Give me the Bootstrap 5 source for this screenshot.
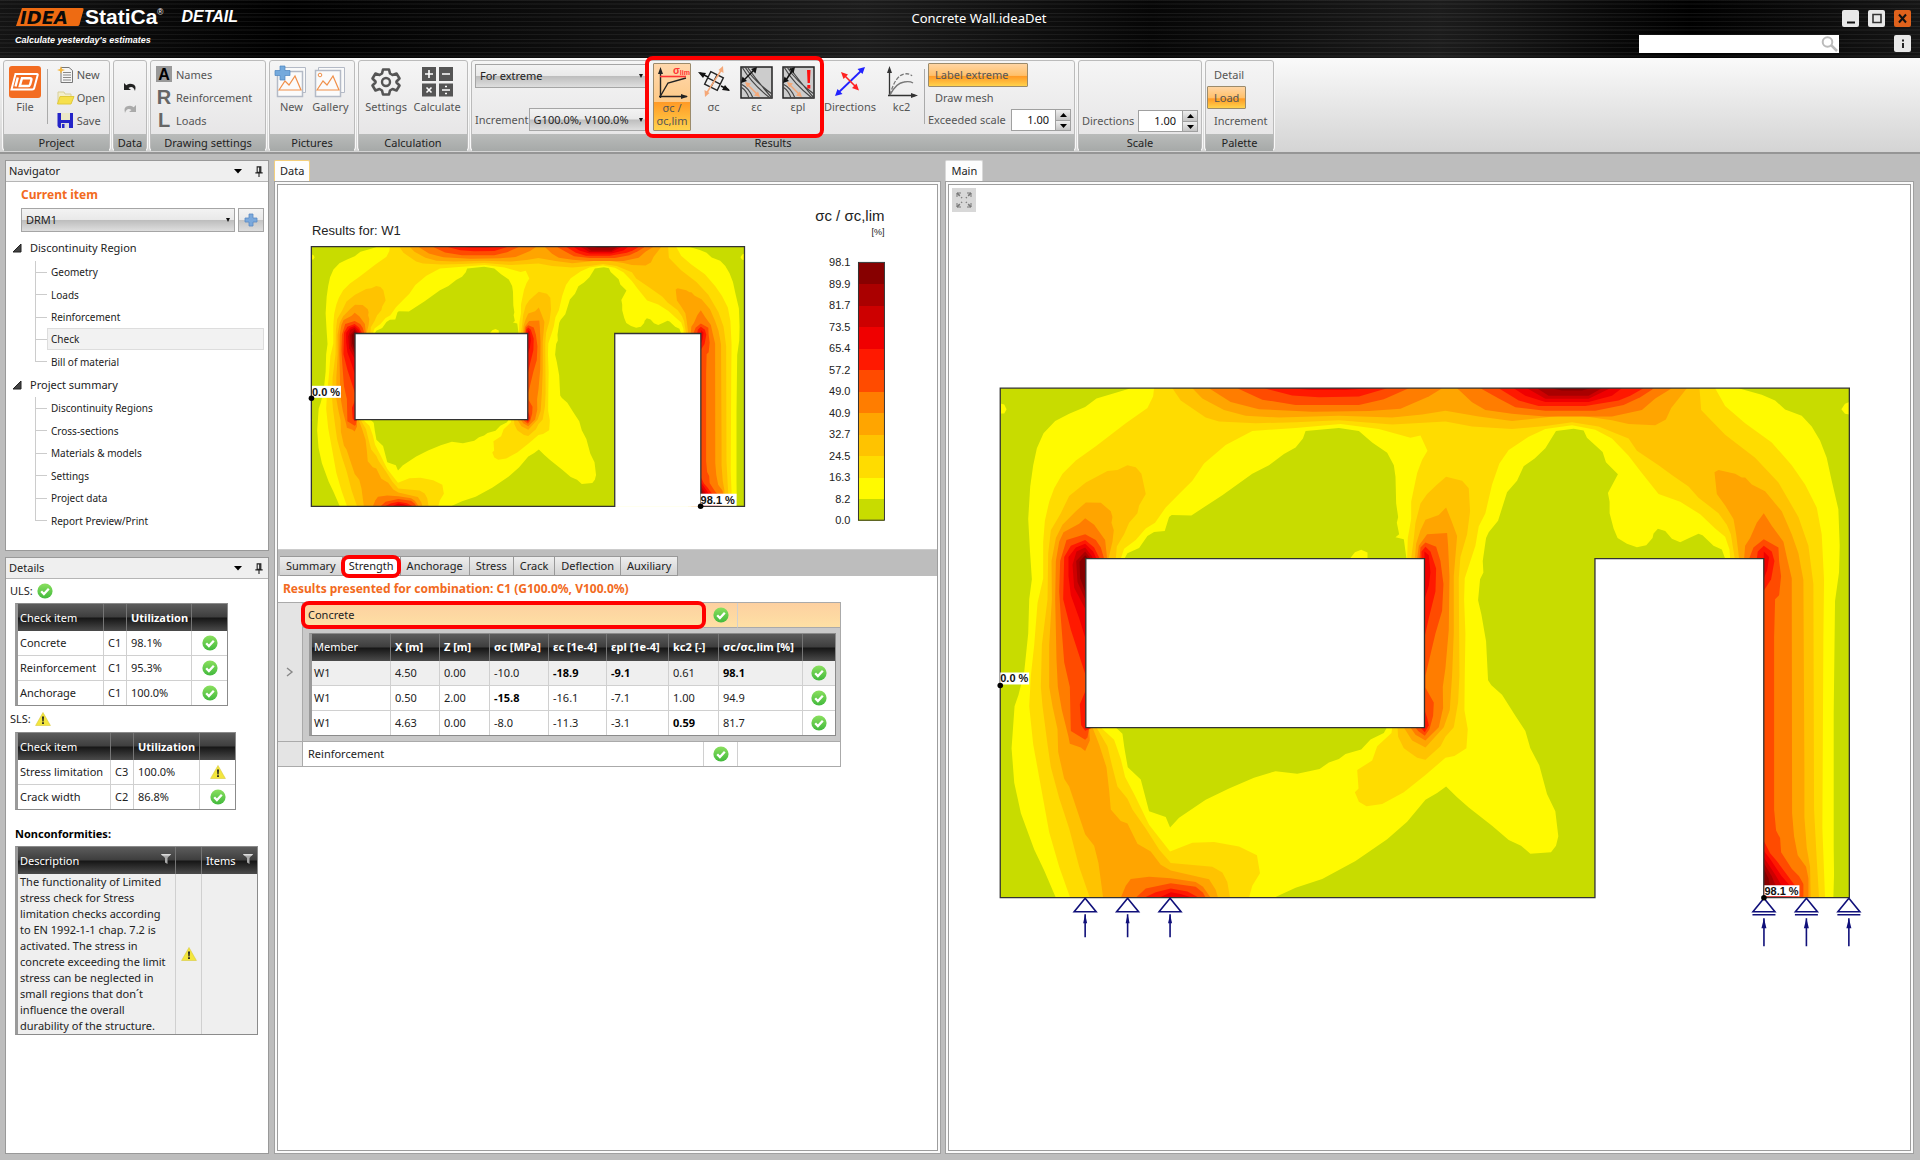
<!DOCTYPE html>
<html lang="en">
<head>
<meta charset="utf-8">
<meta name="viewport" content="width=device-width, initial-scale=1">
<title>Concrete Wall.ideaDet</title>
<link href="https://cdn.jsdelivr.net/npm/bootstrap@5.3.0/dist/css/bootstrap.min.css" rel="stylesheet">
<style>
:root{--ui:"Noto Sans","Open Sans",sans-serif;--orange:#f26a21}
body{font-family:var(--ui);font-size:11px;line-height:16px;color:#222;background:#bdbdbd;min-height:100vh}
button,input,select{font-family:inherit;font-size:inherit;line-height:inherit;color:inherit}
a{color:inherit;text-decoration:none}
svg{display:block;flex:none}

.titlebar{height:58px;color:#fff;background:
 repeating-linear-gradient(180deg,rgba(255,255,255,.07) 0 1px,transparent 1px 3px,rgba(255,255,255,.04) 3px 5px,transparent 5px 8px,rgba(255,255,255,.06) 8px 9px,transparent 9px 13px),
 linear-gradient(90deg,#141414,#000 15%,#1c1c1c 45%,#060606 60%,#1c1c1c 75%,#000 88%,#151515)}
.brand{width:326px;padding:6px 0 0 15px}
.logo-word{font:bold 21px/22px "Liberation Sans",sans-serif}
.logo-mod{font:italic bold 16px/22px "Liberation Sans",sans-serif;margin-left:18px}
.slogan{font:italic bold 9px/14px "Liberation Sans",sans-serif;margin-top:5px}
.doc-title{font-size:13px;padding-top:10px}
.tools{width:288px;padding:10px 9px 0 7px}
.win-btn{width:17px;height:17px;border:0;border-radius:2px;background:#e8e8e8;padding:0;color:#111}
.win-close{background:#e0621c}
.search{width:200px;height:18px;background:#fff;margin-right:55px}
.search input{border:0;outline:0;background:none;min-width:0;height:18px}

.ribbon{background:linear-gradient(#fafafa,#d4d4d4);border-bottom:2px solid #959595;padding:2px 3px;height:96px;gap:3px}
.rgroup{border:1px solid #bbb;border-radius:3px;background:linear-gradient(#f5f5f5,#e4e3e4);box-shadow:0 0 0 1px #f8f8f8;overflow:visible;color:#555}
.rgroup h2{margin:0;font-size:11px;line-height:17px;font-weight:400;text-align:center;color:#222;background:linear-gradient(#b9bbba,#a6a9a8)}
.rbody{height:73px;padding:2px 3px}
.rbtn{border:1px solid transparent;background:none;padding:0;color:#555;border-radius:1px}
.rbtn.big{height:68px;display:flex;flex-direction:column;align-items:center;padding-top:2px}
.rbtn.row-item{height:23px;display:flex;align-items:center;gap:3px;white-space:nowrap}
.rbtn svg{overflow:visible}
.rbtn.on{border:1px solid #9b8b6c;background:linear-gradient(#ffd5a3,#ffc06a 52%,#ff9a26 56%,#ffd24c)}
.rbtn.big.on{background:linear-gradient(#ffd8ad,#fdc987 57%,#ff9a26 58%,#ffd24c)}
.rg-project{width:107px}.rg-data{width:34px}.rg-draw{width:116px}.rg-pict{width:86px}
.rg-calc{width:110px}.rg-res{width:604px}.rg-scale{width:124px}.rg-pal{width:69px}
.rsep{width:1px;background:#aaa;margin:6px 0 8px}
.spin{width:60px;height:22px;background:#fff;border:1px solid #a0a0a0}
.spin input{width:43px;border:0;outline:0;text-align:right;padding:0 6px 0 0;color:#111;background:none;appearance:textfield;-moz-appearance:textfield}
.spin input::-webkit-inner-spin-button{display:none}
.spin button{width:15px;height:10px;border:0;border-left:1px solid #a0a0a0;padding:0;background:linear-gradient(#eee,#c4c4c4);display:flex;align-items:center;justify-content:center}
.spin button+button{border-top:1px solid #a0a0a0}
.pick{position:relative}
.pick select{width:100%;height:100%;appearance:none;border:1px solid #a5a5a5;padding:0 4px;color:#222;background:linear-gradient(#f3f3f3,#e9e9e9 49%,#bdbdbd 51%,#dedede);border-radius:0}
.pick::after{content:"";position:absolute;right:5px;top:50%;margin-top:-2px;border:2px solid transparent;border-top:4px solid #111;border-bottom:0;pointer-events:none}
.hl{position:relative}
.hl::after{content:"";position:absolute;border:4px solid #f00;border-radius:8px;pointer-events:none;z-index:3}
.hl-tools::after{inset:-7px -5px -6px -8px}
.hl-tab::after{inset:-2px -1px -3px -2px}
.hl-row::after{inset:-2px -3px -2px -2px}

.work{padding:6px 6px 6px 5px;gap:6px}
.side{width:264px;gap:6px}
.pane{background:#fff;border:1px solid #999}
.pane-head{height:21px;background:#efefef;border-bottom:1px solid #b5b5b5;padding:0 4px 0 3px}
.nav-pane{height:391px}
.current{color:var(--orange);font-weight:700;font-size:12px;line-height:26px;padding-left:15px}
.item-row{padding:0 4px 0 15px;gap:3px;height:24px}
.add-btn{width:26px;border:1px solid #a5a5a5;background:linear-gradient(#f3f3f3,#e9e9e9 49%,#c4c4c4 51%,#dedede);padding:0}
.tree-head{height:24px;gap:8px;padding-left:6px}
.tree-first{margin:4px 0 1px}
.tree{list-style:none;margin:0 4px 0 29px;padding:0;display:flex;flex-direction:column;font-size:10px}
.tree-a{height:112px}.tree-b{height:135px}
.tree li{flex:1 1 0;display:flex;align-items:center;border-left:1px solid #ccc}
.tree li:last-child{border-color:transparent;position:relative}
.tree li:last-child::after{content:"";position:absolute;left:-1px;top:0;height:50%;border-left:1px solid #ccc}
.tree li::before{content:"";width:11px;border-top:1px solid #ccc;flex:none}
.tree a{flex:1;padding-left:3px;line-height:20px;border:1px solid transparent}
.tree a.on{background:#f2f2f2;border-color:#ddd}

.grid{border:1px solid #8b8b8b;border-left:3px solid #9a9a9a;table-layout:fixed;border-collapse:separate;border-spacing:0;margin:0}
.grid th{height:27px;color:#fff;font-weight:400;background:linear-gradient(#5c5c5c,#3e3e3e 48%,#161616 52%,#4b4b4b);border-right:1px solid #757575;padding:0 0 0 4px;white-space:nowrap}
.grid td{height:25px;border-right:1px solid #d0d0d0;border-bottom:1px solid #d0d0d0;padding:0 0 0 4px;white-space:nowrap}
.grid tr>:first-child{padding-left:2px}
.grid tr>:last-child{border-right:0}
.grid tr:last-child td{border-bottom:0;height:24px}
.grid td svg{margin:0 auto}
.grid td.ico{padding:0}
.grid tr:last-child td.note{background:#efefef;white-space:normal;height:160px}
.grid td.note:first-child{padding-right:8px}
.grid th b{font-weight:700}
.g-uls{width:213px}.g-sls{width:221px}.g-non{width:243px}
.side-body{padding-left:9px}

.tab-top{height:21px;padding:0 5px;border:1px solid #d9d9d9;border-bottom:0;background:#fdfdfd;border-radius:2px 2px 0 0}
.tab-top.warm{border-color:#f3cf7c}
.dock{background:#fafafa;border:1px solid #a0a0a0;padding:2px}
.sheet{background:#fff;border:1px solid #9d9d9d}
.data-col{flex:667 1 0;min-width:0;margin-left:-1px}
.main-col{flex:968 1 0;min-width:0;margin-left:-2px}
.plot{width:100%;height:auto}
.tabs{background:#bdbdbd;border-top:1px solid #ccc;height:27px;padding:6px 0 0 2px}
.tabs button{border:1px solid #999;border-left-width:0;background:linear-gradient(#eee,#d3d3d3);height:20px;padding:0 6px;color:#222}
.tabs button.on{background:#fff}
.combo{color:var(--orange);font-weight:700;font-size:12px;line-height:26px;padding-left:5px}
.outer{width:563px;border-collapse:separate;border-spacing:0;table-layout:fixed;border:1px solid #aaa;border-left:0;margin:0}
.outer>tbody>tr>td{padding:0;border-bottom:1px solid #aaa}
.outer>tbody>tr:last-child>td{border-bottom:0}
.outer td.gut{background:#e4e4e4;border-right:1px solid #aaa;text-align:center}
.outer .cellrow{height:24px;padding-left:5px;line-height:24px}
.outer .vline{border-right:1px solid #d0d0d0}
.outer .sel{background:linear-gradient(#fdd0a0,#fee0a4)}
.outer .nest{background:#c9c9c9;padding:5px 4px 5px 6px}
.g-res{width:100%;background:#fff}
.g-res th{font-weight:700}.g-res th:first-child{font-weight:400}
.g-res td b{color:#000}
.shade td{background:#efefef}
.canvas{position:relative;min-height:600px}
.fit-btn{position:absolute;left:3px;top:3px;width:24px;height:24px;border:0;background:#d8d8d8;padding:0}
.canvas>.plot{position:absolute;inset:0;width:100%;height:100%}
.arial{font-family:"Liberation Sans",Arial,sans-serif}
.iso polygon{stroke:#fff0b0;stroke-opacity:.35;stroke-width:1px;vector-effect:non-scaling-stroke}
</style>
<script src="https://cdn.jsdelivr.net/npm/bootstrap@5.3.0/dist/js/bootstrap.bundle.min.js"></script>
</head>
<body class="d-flex flex-column">

<svg width="0" height="0" class="position-absolute" aria-hidden="true">
<defs>
<linearGradient id="okg" x2="0" y2="1"><stop stop-color="#8be05f"/><stop offset="1" stop-color="#41b93c"/></linearGradient>
<symbol id="ok" viewBox="0 0 16 16"><circle cx="8" cy="8" r="7.6" fill="url(#okg)"/><path d="M4.2 8.2l2.7 2.8 4.9-5.2" fill="none" stroke="#fff" stroke-width="2.3"/></symbol>
<symbol id="warn" viewBox="0 0 16 16"><path d="M8 1.5L15.4 14.5H.6z" fill="#f3e63d" stroke="#d9c940" stroke-width=".6"/><path d="M7 5.5h2l-.4 5h-1.2zM7.1 11.3h1.8v1.8H7.1z" fill="#222"/></symbol>
<symbol id="pin" viewBox="0 0 10 12"><path d="M3 1h4v6H3zM1 7.5h8M5 8v4" fill="none" stroke="#222" stroke-width="1.2"/><path d="M6 1v6" stroke="#222" stroke-width="1.6"/></symbol>
<symbol id="funnel" viewBox="0 0 10 12"><path d="M0 1h10L6.500 5v6L4 9.500V5z" fill="#aaa"/><path d="M0 1h10L9 2.500H1z" fill="#ddd"/></symbol>
<g id="contours">
 <polygon points="63,48 2613,48 2613,1381 63,1381" fill="#fffa00"/>
 <g fill="#c8dc00">
  <polygon points="63,48 455,48 410,60 352,75 318,97 270,115 228,134 193,166 173,205 162,250 153,305 147,390 152,470 158,548 150,600 147,690 135,790 118,850 106,880 97,990 105,1080 125,1160 165,1255 195,1310 230,1381 63,1381"/>
  <polygon points="980,160 1080,152 1140,160 1180,190 1225,217 1245,250 1250,280 1252,350 1258,385 1254,400 1261,430 1250,438 1275,443 1283,494 436,494 445,480 480,466 505,435 525,424 557,422 570,385 578,380 637,381 730,328 820,272 870,250 915,220 950,203 972,180"/>
  <polygon points="1732,160 1785,154 1815,159 1825,178 1872,215 1882,242 1918,273 1888,322 1893,345 1893,375 1905,415 1917,440 1945,455 1975,464 2003,459 2022,440 2025,428 2038,416 2060,422 2080,442 2105,451 2132,440 2160,429 2172,433 2205,460 2230,470 2240,494 1849,494 1849,1381 885,1381 950,1355 1030,1332 1130,1285 1225,1228 1285,1182 1340,1125 1375,1107 1402,1090 1435,1118 1470,1145 1540,1193 1590,1230 1627,1245 1655,1266 1717,1262 1732,1245 1739,1220 1730,1155 1705,1110 1682,1035 1655,990 1640,945 1610,905 1570,850 1538,825 1528,812 1522,710 1508,640 1498,603 1504,548 1514,530 1512,500 1522,440 1530,425 1558,395 1585,320 1615,290 1635,252 1668,232 1700,205"/>
  <polygon points="410,936 430,952 436,990 446,1040 485,1072 510,1155 560,1170 573,1197 600,1172 680,1125 750,1095 825,1067 890,1050 955,1057 1022,1044 1050,1027 1080,1018 1100,1005 1147,993 1175,967 1215,950 1224,936"/>
  <polygon points="2280,48 2350,65 2390,80 2420,104 2470,120 2500,148 2525,185 2545,230 2560,290 2580,365 2584,460 2582,530 2570,605 2566,900 2566,1250 2567,1320 2565,1381 2613,1381 2613,48"/>
 </g>
 <g fill="#fffa00">
  <polygon points="1113,494 1128,477 1147,471 1166,478 1166,494"/>
  <polygon points="63,88 75,91 82,103 75,114 63,114"/>
  <polygon points="2613,84 2600,89 2589,103 2600,115 2613,117"/>
 </g>
 <polygon fill="#ffdc00" points="525,48 522,70 505,100 440,140 350,200 290,237 250,272 225,310 210,345 197,395 192,450 192,545 175,610 165,720 155,800 150,880 162,980 185,1090 210,1210 240,1300 273,1381 810,1381 820,1350 843,1317 834,1270 780,1247 705,1235 640,1237 573,1260 510,1190 465,1110 438,1065 425,1018 405,968 365,936 425,494 435,468 470,445 500,415 528,400 560,360 600,325 640,290 675,245 740,197 820,160 950,152 1085,142 1200,155 1295,178 1325,172 1346,212 1330,235 1315,270 1297,345 1297,390 1287,440 1285,494 1240,936 1238,950 1195,985 1180,1022 1135,1047 1139,1095 1128,1105 1140,1130 1163,1142 1210,1136 1275,1105 1340,1060 1400,1015 1427,1010 1463,990 1467,940 1457,890 1458,800 1460,690 1456,600 1458,545 1475,500 1490,460 1500,410 1520,375 1540,300 1562,245 1590,210 1650,175 1700,155 1780,145 1850,157 1900,180 1950,225 1985,265 2040,325 2105,345 2165,378 2210,415 2240,437 2253,470 2255,494 2300,1381 2540,1381 2532,1200 2535,700 2537,550 2530,430 2515,360 2480,300 2440,250 2380,190 2300,140 2240,95 2210,48"/>
 <g fill="#ffc300">
  <polygon points="580,48 605,80 680,125 720,135 830,140 950,137 1080,132 1240,143 1400,135 1480,148 1600,155 1700,147 1780,137 1860,148 1950,180 1975,212 2040,250 2080,275 2130,305 2160,335 2220,375 2245,405 2257,430 2269,494 2300,1381 2522,1381 2515,1280 2507,1150 2505,560 2490,460 2460,385 2400,295 2330,230 2240,170 2168,105 2163,48"/>
  <polygon points="445,250 470,255 487,272 500,325 480,355 475,375 450,400 435,430 413,462 410,494 352,936 385,985 400,1040 415,1090 445,1122 460,1150 500,1200 540,1255 575,1290 700,1300 730,1315 745,1340 753,1381 332,1381 300,1300 270,1200 240,1120 215,1040 205,980 190,880 185,830 188,720 205,600 207,480 215,420 245,375 270,330 320,295 385,265 415,262"/>
  <polygon points="1402,280 1450,290 1470,310 1474,370 1465,430 1445,490 1440,545 1442,800 1438,870 1425,935 1400,960 1385,985 1340,1020 1315,1015 1275,990 1258,960 1256,936 1290,850 1297,494 1305,440 1310,400 1325,350 1345,325 1375,300"/>
 </g>
 <g fill="#ffa500">
  <polygon points="640,48 670,75 735,105 800,120 900,125 1080,120 1240,125 1330,117 1400,107 1500,122 1600,134 1780,117 1900,132 1950,142 2030,145 2062,130 2078,100 2125,48"/>
  <polygon points="320,347 365,348 395,370 400,385 397,400 404,420 400,450 388,494 340,936 360,980 382,1040 390,1100 395,1150 425,1180 445,1187 475,1240 515,1260 545,1295 575,1310 690,1333 710,1360 717,1381 372,1381 358,1290 345,1245 318,1215 270,1090 255,1070 237,1000 235,940 220,880 210,830 210,720 218,600 217,500 230,440 250,405 290,370"/>
  <polygon points="1402,360 1418,395 1435,435 1425,540 1425,690 1420,800 1413,890 1395,935 1340,988 1300,970 1275,936 1310,850 1308,494 1312,455 1325,420 1340,392 1380,380"/>
  <polygon points="2208,268 2220,262 2270,272 2290,282 2300,282 2320,300 2360,318 2410,370 2440,430 2460,480 2475,550 2478,1050 2478,1170 2485,1250 2495,1300 2497,1381 2280,1381 2282,494 2273,430 2265,390 2240,355 2215,325"/>
 </g>
 <g fill="#ff7d00">
  <polygon points="690,48 755,84 840,103 1000,110 1170,108 1265,102 1350,70 1390,48"/>
  <polygon points="1435,48 1480,85 1520,105 1600,115 1700,122 1900,122 1990,105 2030,75 2080,48"/>
  <polygon points="318,388 345,405 378,445 384,494 330,936 332,970 318,997 305,988 272,978 268,960 248,890 236,830 232,760 228,600 230,500 240,450 253,425 300,403"/>
  <polygon points="1345,430 1405,427 1408,460 1412,540 1410,680 1400,780 1392,830 1393,885 1380,935 1340,970 1310,955 1295,936 1320,850 1315,494 1320,460"/>
  <polygon points="2356,375 2380,408 2415,450 2425,490 2440,545 2441,1160 2447,1220 2458,1270 2483,1300 2490,1330 2490,1381 2300,1381 2297,494 2300,460 2315,440 2335,400"/>
  <polygon points="425,1381 440,1350 455,1332 510,1326 575,1330 650,1340 672,1352 695,1381"/>
 </g>
 <g fill="#ff4b00">
  <polygon points="775,48 850,78 950,92 1140,92 1215,77 1290,48"/>
  <polygon points="1505,48 1560,75 1610,98 1700,107 1850,107 1935,92 1985,72 2020,52 2025,48"/>
  <polygon points="318,430 350,445 365,465 375,494 330,936 325,962 318,968 275,945 272,830 255,765 245,650 240,580 243,500 262,445"/>
  <polygon points="1340,452 1372,463 1385,500 1394,560 1390,630 1370,690 1340,800 1340,832 1365,870 1363,905 1352,940 1338,957 1318,945 1310,936 1325,850 1322,494 1325,465"/>
  <polygon points="2356,443 2400,465 2402,500 2408,540 2402,590 2390,600 2387,700 2387,1150 2393,1205 2405,1225 2408,1262 2440,1305 2462,1325 2475,1345 2475,1381 2300,1381 2312,494 2325,465"/>
  <polygon points="470,1381 500,1357 575,1343 650,1352 672,1368 680,1381"/>
 </g>
 <g fill="#ff1900">
  <polygon points="855,48 940,67 1020,72 1140,70 1225,48"/>
  <polygon points="1560,48 1620,80 1680,95 1820,95 1920,80 1955,68 1995,48"/>
  <polygon points="318,445 345,465 362,494 340,600 340,936 318,944 306,930 302,875 318,842 330,820 318,795 275,680 252,600 255,490 275,460"/>
  <polygon points="1340,463 1355,475 1372,520 1370,580 1350,650 1337,700 1328,600 1328,475"/>
  <polygon points="1337,890 1345,910 1350,930 1338,948 1325,936"/>
  <polygon points="2356,460 2380,475 2388,500 2378,548 2356,578 2335,494 2338,475"/>
  <polygon points="2356,1232 2375,1265 2395,1285 2425,1320 2450,1350 2460,1381 2350,1381"/>
  <polygon points="495,1381 530,1367 575,1357 625,1365 660,1381"/>
 </g>
 <g fill="#f00000">
  <polygon points="930,48 1000,53 1100,53 1170,48"/>
  <polygon points="1605,48 1640,68 1700,84 1830,84 1900,68 1930,48"/>
  <polygon points="318,455 342,475 352,494 335,600 318,700 300,650 275,590 268,540 268,490 290,465"/>
  <polygon points="1337,475 1350,485 1355,530 1350,565 1337,600"/>
  <polygon points="2356,475 2372,490 2366,525 2356,545"/>
  <polygon points="2356,1258 2375,1280 2410,1325 2435,1350 2440,1381 2350,1381"/>
  <polygon points="540,1381 575,1367 605,1371 640,1381"/>
 </g>
 <g fill="#cd0000">
  <polygon points="1645,48 1700,76 1830,76 1895,48"/>
  <polygon points="318,465 340,490 318,625 285,570 280,510 292,475"/>
  <polygon points="2356,1275 2390,1320 2410,1350 2415,1381 2350,1381"/>
 </g>
 <g fill="#aa0000">
  <polygon points="1675,48 1710,68 1830,68 1870,48"/>
  <polygon points="318,475 335,494 318,600 295,555 291,500"/>
  <polygon points="2356,1290 2380,1325 2392,1350 2356,1365"/>
 </g>
 <g fill="#870000">
  <polygon points="1715,48 1750,54 1810,54 1835,48"/>
  <polygon points="318,485 328,494 318,580 303,545 301,502"/>
  <polygon points="2356,1305 2370,1330 2375,1350 2356,1360"/>
 </g>
 <path d="M320 494H1337V936H320zM1849 494H2356V1383H1849z" fill="#fff"/>
 <path d="M63 48H2613V1381H2356V494H1849V1381H63zM320 494H1337V936H320z" fill="none" stroke="#333" stroke-width="1.300" vector-effect="non-scaling-stroke"/>
</g>
<g id="sup"><path d="M0 1L11 14.500H-11zM0 17V40" fill="none" stroke="#10107a" stroke-width="1.600"/><path d="M0 17l2 9h-4z" fill="#10107a"/></g>
<g id="supr"><path d="M0 1L11 14.500H-11zM-11.500 17.500H11.500M0 21V49" fill="none" stroke="#10107a" stroke-width="1.600"/><path d="M0 21l2.500 10h-5z" fill="#10107a"/></g>
</defs>
</svg>

<header class="titlebar d-flex">
 <div class="brand">
  <div class="d-flex align-items-center">
   <svg width="70" height="22" viewBox="0 0 70 22" role="img" aria-label="IDEA"><path d="M7 2H67.500Q69 2 68.500 4L64.500 18.500Q64 20 62.500 20H1z" fill="#ee6b12"/><text x="5" y="17.500" font-family="DejaVu Sans,sans-serif" font-weight="bold" font-style="italic" font-size="18" fill="#0a0a0a">IDEA</text></svg>
   <span class="logo-word">StatiCa</span><sup class="arial">®</sup>
   <span class="logo-mod">DETAIL</span>
  </div>
  <div class="slogan">Calculate yesterday's estimates</div>
 </div>
 <div class="doc-title flex-fill text-center">Concrete Wall.ideaDet</div>
 <div class="tools d-flex flex-column">
  <div class="d-flex justify-content-end" style="gap:9px">
   <button class="win-btn" aria-label="Minimize"><svg width="17" height="17"><path d="M5 12.500h8" stroke="#111" stroke-width="2"/></svg></button>
   <button class="win-btn" aria-label="Maximize"><svg width="17" height="17"><path d="M5 4.500h8v8H5z" fill="none" stroke="#333" stroke-width="1.600"/></svg></button>
   <button class="win-btn win-close" aria-label="Close"><svg width="17" height="17"><path d="M5 4.500l7 8M12 4.500l-7 8" stroke="#111" stroke-width="2"/></svg></button>
  </div>
  <div class="d-flex pt-2 justify-content-end">
   <div class="search d-flex align-items-center"><input class="flex-fill" type="text" aria-label="Search"><svg width="18" height="18"><circle cx="6.500" cy="7" r="4.800" fill="none" stroke="#bbb" stroke-width="2"/><path d="M10 10l6 6" stroke="#bbb" stroke-width="2.500"/></svg></div>
   <button class="win-btn" aria-label="Info"><svg width="17" height="17"><path d="M8 4.500h2v2H8zM8 8h2v5H8z" fill="#222"/></svg></button>
  </div>
 </div>
</header>

<div class="ribbon d-flex" role="toolbar">
 <section class="rgroup rg-project">
  <div class="rbody d-flex">
   <button class="rbtn big"><svg width="34" height="33" viewBox="0 0 34 33"><rect x="1" y="0" width="32" height="32" rx="3" fill="#f36c21"/><path d="M7.500 8H29q1 0 .7 1l-3.500 13q-.3 1.500-2 1.500H3.500z" fill="none" stroke="#fff" stroke-width="2"/><path d="M9.800 11.500l-2.300 9M14 12.200h8q1.800 0 1.400 1.500l-1.200 4.500q-.5 1.800-2.400 1.800h-8z" fill="none" stroke="#fff" stroke-width="2.400"/></svg>File</button>
   <div class="rsep mx-1"></div>
   <div class="ps-1">
    <button class="rbtn row-item"><svg width="17" height="17"><path d="M4 1.500h8l3.500 3v12H4z" fill="#f5f5f5" stroke="#777"/><path d="M6 6.500h8M6 9h8M6 11.500h8M6 14h8" stroke="#888"/><path d="M4 0l1 3 3 1-3 1-1 3-1-3-3-1 3-1z" fill="#f6b73c"/></svg>New</button>
    <button class="rbtn row-item"><svg width="17" height="17"><path d="M1 15V3h6l1 2h6v3" fill="#f3eecb" stroke="#d8cf9a"/><path d="M3 7.500h14L14 15H.5z" fill="#f6e04c" stroke="#e0c93c"/></svg>Open</button>
    <button class="rbtn row-item"><svg width="17" height="17"><path d="M.5 1h15.500v15H2L.5 14z" fill="#2424c8"/><path d="M4 1h9v7H4z" fill="#ece9c8"/><path d="M4 11h8v5H4z" fill="#ddd"/><path d="M5 12h2.500v4H5z" fill="#2424c8"/></svg>Save</button>
   </div>
  </div><h2>Project</h2>
 </section>
 <section class="rgroup rg-data">
  <div class="rbody d-flex flex-column align-items-center pt-3">
   <button class="rbtn mt-1" aria-label="Undo"><svg width="16" height="12"><path d="M2 1v7h7L6.500 6Q11 3 13 9q2-6-3-7Q6.500 1 4.300 3.200z" fill="#222"/></svg></button>
   <button class="rbtn mt-2" aria-label="Redo"><svg width="16" height="12"><path d="M14 1v7H7l2.500-2Q5 3 3 9q-2-6 3-7 3.500-1 5.700 1.200z" fill="#aaa"/></svg></button>
  </div><h2>Data</h2>
 </section>
 <section class="rgroup rg-draw">
  <div class="rbody ps-1">
   <button class="rbtn row-item"><svg width="17" height="17"><rect width="16" height="16" fill="#999"/><text x="8" y="14" text-anchor="middle" font-family="Liberation Sans" font-weight="bold" font-size="16" fill="#000">A</text></svg>Names</button>
   <button class="rbtn row-item"><svg width="17" height="17"><text x="8" y="15" text-anchor="middle" font-family="Liberation Sans" font-weight="bold" font-size="20" fill="#666">R</text></svg>Reinforcement</button>
   <button class="rbtn row-item"><svg width="17" height="17"><text x="8" y="15" text-anchor="middle" font-family="Liberation Sans" font-weight="bold" font-size="20" fill="#666">L</text></svg>Loads</button>
  </div><h2>Drawing settings</h2>
 </section>
 <section class="rgroup rg-pict">
  <div class="rbody d-flex justify-content-around">
   <button class="rbtn big"><svg width="32" height="33"><path d="M7.500 1.500h23v25h-23z" fill="#fafafa" stroke="#b4bac6"/><path d="M2.500 5.500h25v25h-25z" fill="#fbfbfb" stroke="#b4bac6" stroke-width="1.500"/><path d="M4 24l6-9 4 4 6-9 6 14z" fill="none" stroke="#f0904a" stroke-width="1.200"/><path d="M5 0h5v4.500h5v5h-5V14H5V9.500H0v-5h5z" fill="#74a9dc" stroke="#4c84bf" stroke-width=".7"/></svg>New</button>
   <button class="rbtn big"><svg width="32" height="33"><path d="M4.500 1.500h26v25h-26z" fill="#fafafa" stroke="#b4bac6"/><path d="M1.500 4.500h25v26h-25z" fill="#fbfbfb" stroke="#b4bac6" stroke-width="1.500"/><path d="M3 24l6-9 4 4 6-9 6 14z" fill="none" stroke="#f0904a" stroke-width="1.200"/><circle cx="6" cy="9" r="1.800" fill="none" stroke="#f0904a"/></svg>Gallery</button>
  </div><h2>Pictures</h2>
 </section>
 <section class="rgroup rg-calc">
  <div class="rbody d-flex justify-content-around">
   <button class="rbtn big"><svg width="32" height="33" viewBox="-16 -16 32 33"><path d="M-3-12.500h6l1 4 2.500 1.500 4-1.500 3 5-3 3v1l3 3-3 5-4-1.500L4 8.500l-1 4h-6l-1-4L-6.500 7l-4 1.500-3-5 3-3v-1l-3-3 3-5 4 1.500L-4-8.500z" fill="none" stroke="#555" stroke-width="2.600" stroke-linejoin="round"/><circle r="4" fill="none" stroke="#555" stroke-width="2.400"/></svg>Settings</button>
   <button class="rbtn big"><svg width="32" height="33"><path d="M1 1h14v14H1zM18 1h14v14H18zM1 17.500h14v13H1zM18 17.500h14v13H18z" fill="#555"/><path d="M8 4v8M4 8h8M21 8h8M5.500 21.500l5 5M10.500 21.500l-5 5M21 24h8M24 20.500h2M24 27.500h2" stroke="#fff" stroke-width="1.600"/></svg>Calculate</button>
  </div><h2>Calculation</h2>
 </section>
 <section class="rgroup rg-res">
  <div class="rbody d-flex">
   <div class="d-flex flex-column justify-content-between" style="width:173px;padding:1px 0">
    <div class="pick" style="height:24px"><select aria-label="Result selection"><option>For extreme</option></select></div>
    <div class="d-flex align-items-center" style="height:23px"><label for="inc">Increment</label><div class="pick flex-fill h-100"><select id="inc"><option>G100.0%, V100.0%</option></select></div></div>
   </div>
   <div class="rsep"></div>
   <div class="hl hl-tools d-flex" style="margin-left:4px">
    <button class="rbtn big on" style="width:38px;line-height:13px"><svg width="34" height="35"><path d="M5.500 32V5M4 30.500h28" stroke="#222" stroke-width="1.400"/><path d="M5.500 1l2.500 7H3zM33 30.500l-7-2.500v5z" fill="#222"/><path d="M5.500 30L13 17l18-5" fill="none" stroke="#222" stroke-width="1.400"/><path d="M5 10.500h26" stroke="#f33" stroke-width="1.600"/><text x="18" y="8" font-family="Liberation Sans" font-weight="bold" font-size="10" fill="#f33">σ<tspan font-size="7" dy="1">lim</tspan></text></svg>σc /<br>σc,lim</button>
    <button class="rbtn big" style="width:45px"><svg width="32" height="33"><g transform="rotate(26 16 15)"><path d="M9 8h14v14H9zM9 15h14M16 8v14" fill="none" stroke="#222" stroke-width="1.400"/></g><path d="M2 7l8 4M31 24l-8-4" stroke="#111" stroke-width="1.500"/><path d="M0 6l8 1-3 5zM32 25l-8-1 3-5z" fill="#111"/><path d="M24 3L8 28" stroke="#f5a878" stroke-width="1.500"/><path d="M25 0l.5 7-5-3zM7 31l-.5-7 5 3z" fill="#f5a878"/></svg>σc</button>
    <button class="rbtn big" style="width:41px"><svg width="33" height="33"><path d="M1 1h31v31H1z" fill="#ccc" stroke="#222" stroke-width="1.500"/><path d="M5 1Q14 15 32 28M2 1Q12 18 30 32M8 2Q18 16 32 32M1 18Q9 22 13 32M1 21Q7 25 9 32" fill="none" stroke="#444" stroke-width="1.200"/><path d="M4 14L14 4" stroke="#111" stroke-width="1.500"/><path d="M17 1l-1.500 6.500-4.500-4.500zM1 17l1.500-6.500 4.500 4.500z" fill="#111"/><path d="M7 18l11 11" stroke="#f5a878" stroke-width="1.500"/><path d="M5 16l6 1.500-4 4zM20 31l-6-1.500 4-4z" fill="#f5a878"/></svg>εc</button>
    <button class="rbtn big" style="width:42px"><svg width="33" height="33"><path d="M1 1h31v31H1z" fill="#ccc" stroke="#222" stroke-width="1.500"/><path d="M5 1Q14 15 32 28M2 1Q12 18 30 32M8 2Q18 16 32 32M1 18Q9 22 13 32M1 21Q7 25 9 32" fill="none" stroke="#444" stroke-width="1.200"/><path d="M4 14L10 5" stroke="#111" stroke-width="1.500"/><path d="M13 1l-1.500 6.500-4.500-4.500zM1 17l1.500-6.500 4.500 4.500z" fill="#111"/><path d="M7 18l11 11" stroke="#f5a878" stroke-width="1.500"/><path d="M5 16l6 1.500-4 4zM20 31l-6-1.500 4-4z" fill="#f5a878"/><path d="M25 4h3.500l-.6 13h-2.300zM25.300 19h3v3.500h-3z" fill="#f11"/></svg>εpl</button>
   </div>
   <button class="rbtn big" style="width:62px"><svg width="32" height="33"><path d="M4 27L28 4" stroke="#22f" stroke-width="1.800"/><path d="M31 1l-2.500 7-5-5zM1 30l2.500-7 5 5z" fill="#22f"/><path d="M10 9l13 13" stroke="#f22" stroke-width="1.600"/><path d="M7 6l7 2.500-4.500 4.500zM25 24.500l-7-2.500 4.500-4.500z" fill="#f22"/></svg>Directions</button>
   <button class="rbtn big" style="width:41px"><svg width="32" height="33"><path d="M3.500 30V5M2 29.500h27" stroke="#333" stroke-width="1.300"/><path d="M3.500 0l2.500 7H1zM32 29.500l-7-2.500v5z" fill="#333"/><path d="M4 29Q9 10 18 8q6-1 8 2" fill="none" stroke="#777" stroke-width="1.300" stroke-dasharray="4 1.500"/><path d="M4 29Q10 17 18 16q6-1 9 1" fill="none" stroke="#777" stroke-width="1.300"/></svg>kc2</button>
   <div class="rsep" style="margin-left:2px"></div>
   <div class="d-flex flex-column flex-fill" style="padding-left:3px">
    <button class="rbtn on align-self-start text-start" style="width:100px;height:24px;padding:0 6px">Label extreme</button>
    <button class="rbtn row-item" style="height:22px;padding:0 6px">Draw mesh</button>
    <div class="d-flex align-items-center justify-content-between"><label for="exs">Exceeded scale</label><div class="spin d-flex"><input id="exs" type="number" value="1.00" step="0.1"><div><button aria-label="Up"><svg width="7" height="4"><path d="M0 4h7L3.500 0z"/></svg></button><button aria-label="Down"><svg width="7" height="4"><path d="M0 0h7L3.500 4z"/></svg></button></div></div></div>
   </div>
  </div><h2>Results</h2>
 </section>
 <section class="rgroup rg-scale">
  <div class="rbody d-flex align-items-end"><div class="d-flex align-items-center justify-content-between flex-fill"><label for="dirs">Directions</label><div class="spin d-flex"><input id="dirs" type="number" value="1.00" step="0.1"><div><button aria-label="Up"><svg width="7" height="4"><path d="M0 4h7L3.500 0z"/></svg></button><button aria-label="Down"><svg width="7" height="4"><path d="M0 0h7L3.500 4z"/></svg></button></div></div></div></div>
  <h2>Scale</h2>
 </section>
 <section class="rgroup rg-pal">
  <div class="rbody d-flex flex-column align-items-start" style="padding:2px 1px">
   <button class="rbtn row-item" style="padding:0 6px">Detail</button>
   <button class="rbtn row-item on" style="padding:0 6px">Load</button>
   <button class="rbtn row-item" style="padding:0 6px">Increment</button>
  </div><h2>Palette</h2>
 </section>
</div>

<main class="work d-flex flex-fill">
 <aside class="side d-flex flex-column flex-shrink-0">
  <section class="pane nav-pane">
   <div class="pane-head d-flex align-items-center"><span class="flex-fill">Navigator</span><svg width="8" height="5" class="me-2"><path d="M0 0h8L4 4.500z"/></svg><svg width="10" height="11" class="ms-1"><use href="#pin"/></svg></div>
   <div class="current">Current item</div>
   <div class="item-row d-flex"><div class="pick flex-fill"><select aria-label="Current item"><option>DRM1</option></select></div><button class="add-btn d-flex align-items-center justify-content-center" aria-label="Add"><svg width="14" height="14"><path d="M5 1h4v4h4v4H9v4H5V9H1V5h4z" fill="#7ba9dc" stroke="#5b8cc4" stroke-width=".8"/></svg></button></div>
   <div class="tree-head tree-first d-flex align-items-center"><svg width="10" height="10"><path d="M9 1v8H1z" fill="#444" stroke="#222"/></svg>Discontinuity Region</div>
   <ul class="tree tree-a"><li><a href="#">Geometry</a></li><li><a href="#">Loads</a></li><li><a href="#">Reinforcement</a></li><li><a href="#" class="on">Check</a></li><li><a href="#">Bill of material</a></li></ul>
   <div class="tree-head d-flex align-items-center"><svg width="10" height="10"><path d="M9 1v8H1z" fill="#444" stroke="#222"/></svg>Project summary</div>
   <ul class="tree tree-b"><li><a href="#">Discontinuity Regions</a></li><li><a href="#">Cross-sections</a></li><li><a href="#">Materials &amp; models</a></li><li><a href="#">Settings</a></li><li><a href="#">Project data</a></li><li><a href="#">Report Preview/Print</a></li></ul>
  </section>
  <section class="pane flex-fill">
   <div class="pane-head d-flex align-items-center"><span class="flex-fill">Details</span><svg width="8" height="5" class="me-2"><path d="M0 0h8L4 4.500z"/></svg><svg width="10" height="11" class="ms-1"><use href="#pin"/></svg></div>
   <div class="d-flex align-items-center gap-1 ps-1" style="height:24px">ULS:<svg width="16" height="16"><use href="#ok"/></svg></div>
   <div class="side-body">
    <table class="grid g-uls"><colgroup><col style="width:86px"><col style="width:23px"><col style="width:65px"><col></colgroup>
     <tr><th>Check item</th><th></th><th><b>Utilization</b></th><th></th></tr>
     <tr><td>Concrete</td><td>C1</td><td>98.1%</td><td class="ico"><svg width="16" height="16"><use href="#ok"/></svg></td></tr>
     <tr><td>Reinforcement</td><td>C1</td><td>95.3%</td><td class="ico"><svg width="16" height="16"><use href="#ok"/></svg></td></tr>
     <tr><td>Anchorage</td><td>C1</td><td>100.0%</td><td class="ico"><svg width="16" height="16"><use href="#ok"/></svg></td></tr>
    </table>
   </div>
   <div class="d-flex align-items-center gap-1 ps-1" style="height:26px">SLS:<svg width="16" height="16"><use href="#warn"/></svg></div>
   <div class="side-body">
    <table class="grid g-sls"><colgroup><col style="width:93px"><col style="width:23px"><col style="width:66px"><col></colgroup>
     <tr><th>Check item</th><th></th><th><b>Utilization</b></th><th></th></tr>
     <tr><td>Stress limitation</td><td>C3</td><td>100.0%</td><td class="ico"><svg width="16" height="16"><use href="#warn"/></svg></td></tr>
     <tr><td>Crack width</td><td>C2</td><td>86.8%</td><td class="ico"><svg width="16" height="16"><use href="#ok"/></svg></td></tr>
    </table>
    <div class="fw-bold text-black pt-3 pb-1">Nonconformities:</div>
    <table class="grid g-non"><colgroup><col style="width:158px"><col style="width:26px"><col></colgroup>
     <tr><th><span class="d-flex justify-content-between pe-1">Description<svg width="10" height="12"><use href="#funnel"/></svg></span></th><th></th><th><span class="d-flex justify-content-between pe-1">Items<svg width="10" height="12"><use href="#funnel"/></svg></span></th></tr>
     <tr><td class="note">The functionality of Limited stress check for Stress limitation checks according to EN 1992-1-1 chap. 7.2 is activated. The stress in concrete exceeding the limit stress can be neglected in small regions that don´t influence the overall durability of the structure.</td><td class="note ico"><svg width="16" height="16"><use href="#warn"/></svg></td><td class="note"></td></tr>
    </table>
   </div>
  </section>
 </aside>

 <section class="data-col d-flex flex-column">
  <div class="d-flex"><button class="tab-top warm">Data</button></div>
  <div class="dock flex-fill d-flex"><div class="sheet flex-fill">
   <svg class="plot arial" viewBox="0 0 660 364" fill="#222">
    <text x="34" y="50" font-size="13">Results for: W1</text>
    <g class="iso" transform="translate(22.7 52.3) scale(.17 .195)"><use href="#contours"/></g>
    <rect x="34" y="201" width="29" height="12" fill="#fff"/><text x="34" y="211" font-size="11" font-weight="bold" fill="#111">0.0 %</text><circle cx="33.500" cy="213.500" r="2.800" fill="#000"/>
    <rect x="423" y="309" width="36" height="12" fill="#fff"/><text x="423" y="319" font-size="11" font-weight="bold" fill="#111">98.1 %</text><circle cx="423" cy="321.500" r="2.800" fill="#000"/>
    <text x="607" y="36" font-size="15" text-anchor="end">σc / σc,lim</text>
    <text x="607" y="50" font-size="9" text-anchor="end">[%]</text>
    <g shape-rendering="crispEdges">
     <rect x="581" y="78" width="26" height="22" fill="#870000"/><rect x="581" y="99" width="26" height="22" fill="#aa0000"/><rect x="581" y="121" width="26" height="22" fill="#cd0000"/><rect x="581" y="142" width="26" height="22" fill="#f00000"/><rect x="581" y="164" width="26" height="22" fill="#ff1900"/><rect x="581" y="185" width="26" height="22" fill="#ff4b00"/><rect x="581" y="207" width="26" height="22" fill="#ff7d00"/><rect x="581" y="228" width="26" height="22" fill="#ffa500"/><rect x="581" y="250" width="26" height="22" fill="#ffc300"/><rect x="581" y="271" width="26" height="22" fill="#ffdc00"/><rect x="581" y="293" width="26" height="22" fill="#fffa00"/><rect x="581" y="314" width="26" height="22" fill="#c8dc00"/>
    </g>
    <rect x="581" y="77.500" width="26" height="258" fill="none" stroke="#333"/>
    <g font-size="11" text-anchor="end"><text x="573" y="81">98.1</text><text x="573" y="103">89.9</text><text x="573" y="124">81.7</text><text x="573" y="146">73.5</text><text x="573" y="167">65.4</text><text x="573" y="189">57.2</text><text x="573" y="210">49.0</text><text x="573" y="232">40.9</text><text x="573" y="253">32.7</text><text x="573" y="275">24.5</text><text x="573" y="296">16.3</text><text x="573" y="318">8.2</text><text x="573" y="339">0.0</text></g>
   </svg>
   <div class="tabs d-flex"><button>Summary</button><button class="on hl hl-tab">Strength</button><button>Anchorage</button><button>Stress</button><button>Crack</button><button>Deflection</button><button>Auxiliary</button></div>
   <div class="combo">Results presented for combination: C1 (G100.0%, V100.0%)</div>
   <table class="outer"><colgroup><col style="width:25px"><col style="width:401px"><col style="width:34px"><col></colgroup>
    <tr><td class="gut" rowspan="2"><svg width="8" height="10" class="mx-auto"><path d="M1 1l5 4-5 4" fill="none" stroke="#888" stroke-width="1.400"/></svg></td><td class="sel vline"><div class="cellrow hl hl-row">Concrete</div></td><td class="sel vline"><svg width="16" height="16" class="mx-auto"><use href="#ok"/></svg></td><td class="sel"></td></tr>
    <tr><td colspan="3"><div class="nest">
     <table class="grid g-res"><colgroup><col style="width:79px"><col style="width:49px"><col style="width:50px"><col style="width:59px"><col style="width:58px"><col style="width:62px"><col style="width:50px"><col style="width:84px"><col></colgroup>
      <tr><th>Member</th><th>X [m]</th><th>Z [m]</th><th>σc [MPa]</th><th>εc [1e-4]</th><th>εpl [1e-4]</th><th>kc2 [-]</th><th>σc/σc,lim [%]</th><th></th></tr>
      <tr class="shade"><td>W1</td><td>4.50</td><td>0.00</td><td>-10.0</td><td><b>-18.9</b></td><td><b>-9.1</b></td><td>0.61</td><td><b>98.1</b></td><td class="ico"><svg width="16" height="16"><use href="#ok"/></svg></td></tr>
      <tr><td>W1</td><td>0.50</td><td>2.00</td><td><b>-15.8</b></td><td>-16.1</td><td>-7.1</td><td>1.00</td><td>94.9</td><td class="ico"><svg width="16" height="16"><use href="#ok"/></svg></td></tr>
      <tr><td>W1</td><td>4.63</td><td>0.00</td><td>-8.0</td><td>-11.3</td><td>-3.1</td><td><b>0.59</b></td><td>81.7</td><td class="ico"><svg width="16" height="16"><use href="#ok"/></svg></td></tr>
     </table></div></td></tr>
    <tr><td class="gut"></td><td class="vline"><div class="cellrow">Reinforcement</div></td><td class="vline"><svg width="16" height="16" class="mx-auto"><use href="#ok"/></svg></td><td></td></tr>
   </table>
  </div></div>
 </section>

 <section class="main-col d-flex flex-column">
  <div class="d-flex"><button class="tab-top">Main</button></div>
  <div class="dock flex-fill d-flex"><div class="sheet canvas flex-fill">
   <svg class="plot arial" viewBox="0 0 961 966">
    <g class="iso" transform="translate(30 185) scale(.33333 .38266)"><use href="#contours"/></g>
    <rect x="51" y="488" width="29" height="12" fill="#fff"/><text x="51" y="498" font-size="11" font-weight="bold" fill="#111">0.0 %</text><circle cx="51" cy="501" r="2.800" fill="#000"/>
    <rect x="816" y="701" width="35" height="11" fill="#fff"/><text x="816" y="711" font-size="11" font-weight="bold" fill="#111">98.1 %</text>
    <use href="#sup" x="136" y="713"/><use href="#sup" x="178.500" y="713"/><use href="#sup" x="221" y="713"/>
    <use href="#supr" x="815.500" y="713"/><use href="#supr" x="858" y="713"/><use href="#supr" x="900.500" y="713"/>
    <circle cx="815.500" cy="713.500" r="2.800" fill="#000"/>
   </svg>
   <button class="fit-btn" aria-label="Zoom to fit"><svg width="24" height="24"><path d="M5 9V5h4M15 5h4v4M19 15v4h-4M9 19H5v-4" fill="none" stroke="#777"/><path d="M5 5l5 5M19 5l-5 5M19 19l-5-5M5 19l5-5" stroke="#777" stroke-width="1.600" stroke-dasharray="4 2"/></svg></button>
  </div></div>
 </section>
</main>
</body>
</html>
